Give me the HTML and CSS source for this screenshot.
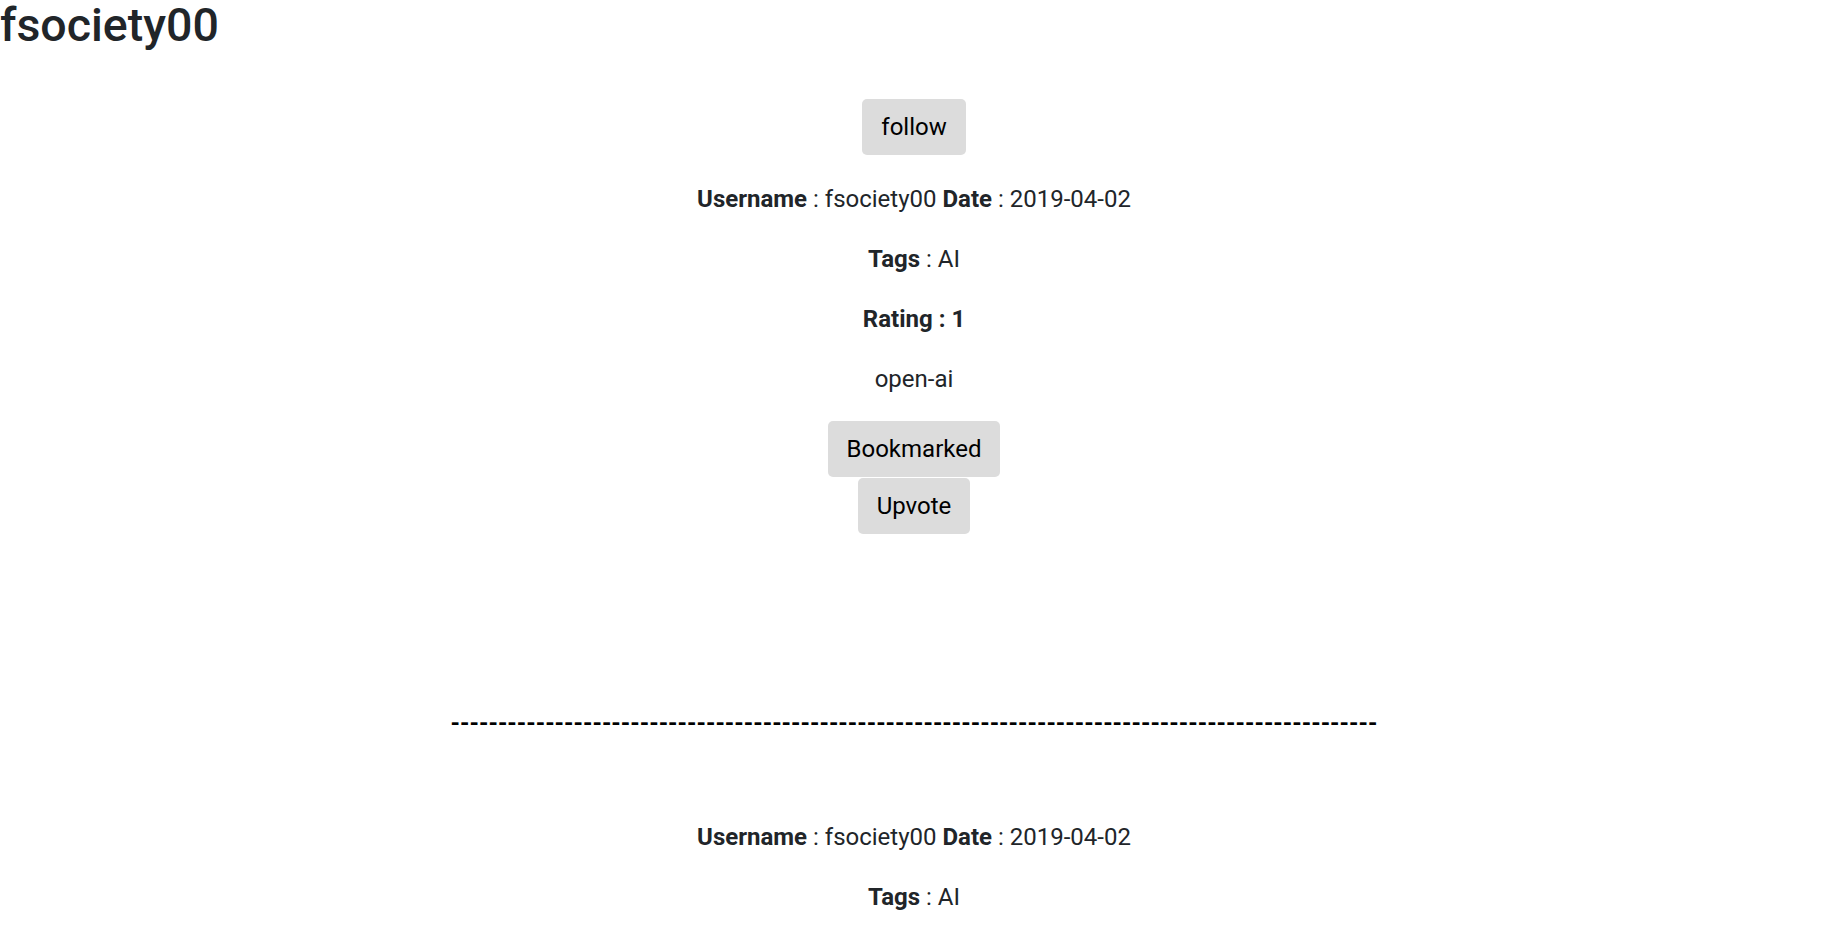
FILE: index.html
```html
<!DOCTYPE html>
<html>
<head>
<meta charset="utf-8">
<link rel="stylesheet" href="styles.css">
</head>
<body>
<h1 class="title">fsociety00</h1>
<div class="content">
  <div class="follow-row"><button class="btn">follow</button></div>
  <div class="post">
    <p><b>Username</b> : fsociety00 <b>Date</b> : 2019-04-02</p>
    <p><b>Tags</b> : AI</p>
    <p><b>Rating : 1</b></p>
    <p>open-ai</p>
    <div class="actions">
      <button class="btn">Bookmarked</button>
      <button class="btn">Upvote</button>
    </div>
  </div>
  <div class="sep"><b>--------------------------------------------------------------------------------------------------</b></div>
  <div class="post">
    <p><b>Username</b> : fsociety00 <b>Date</b> : 2019-04-02</p>
    <p><b>Tags</b> : AI</p>
  </div>
</div>
</body>
</html>
```
FILE: styles.css
```css
html, body {
  margin: 0;
  padding: 0;
  background: #fff;
}
body {
  font-family: Roboto, "Liberation Sans", sans-serif;
  color: #212529;
  font-size: 24px;
  line-height: 1.5;
}
.title {
  margin: 0;
  font-size: 46.5px;
  font-weight: 500;
  line-height: 1.1;
}
.content {
  text-align: center;
  padding-right: 4px;
}
.follow-row {
  margin-top: 48px;
  margin-bottom: 26px;
}
p {
  margin: 0 0 24px 0;
}
b {
  font-weight: 700;
}
.btn {
  font-family: Roboto, "Liberation Sans", sans-serif;
  font-size: 24px;
  line-height: 36px;
  color: #000;
  background: #dcdcdc;
  border: 0;
  border-radius: 5px;
  padding: 10px 19px;
  margin: 0;
  cursor: pointer;
}
.actions {
  display: flex;
  flex-direction: column;
  align-items: center;
  gap: 1px;
}
.sep {
  margin-top: 177px;
  margin-bottom: 84px;
  line-height: 24px;
  font-size: 24px;
  color: #000;
}
```
